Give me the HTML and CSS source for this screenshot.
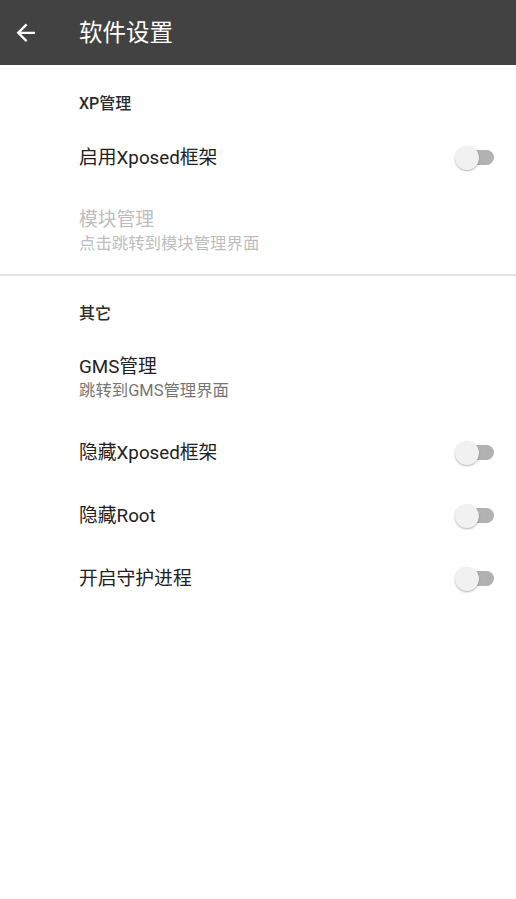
FILE: index.html
```html
<!DOCTYPE html>
<html lang="zh-CN">
<head>
<meta charset="utf-8">
<title>软件设置</title>
<link rel="stylesheet" href="styles.css">
</head>
<body>
<header class="toolbar">
  <span class="back">
    <svg viewBox="0 0 24 24" width="27.6" height="27.6"><path fill="#fff" d="M20 11H7.83l5.59-5.59L12 4l-8 8 8 8 1.41-1.41L7.83 13H20v-2z"/></svg>
  </span>
  <h1 class="title">软件设置</h1>
</header>
<main class="list">
  <div class="category cat-first">XP管理</div>
  <div class="item">
    <div class="text"><div class="label">启用Xposed框架</div></div>
    <span class="switch"><span class="track"></span><span class="thumb"></span></span>
  </div>
  <div class="item two disabled">
    <div class="text"><div class="label">模块管理</div><div class="summary">点击跳转到模块管理界面</div></div>
  </div>
  <div class="divider"></div>
  <div class="category">其它</div>
  <div class="item two">
    <div class="text"><div class="label">GMS管理</div><div class="summary">跳转到GMS管理界面</div></div>
  </div>
  <div class="item">
    <div class="text"><div class="label">隐藏Xposed框架</div></div>
    <span class="switch"><span class="track"></span><span class="thumb"></span></span>
  </div>
  <div class="item">
    <div class="text"><div class="label">隐藏Root</div></div>
    <span class="switch"><span class="track"></span><span class="thumb"></span></span>
  </div>
  <div class="item">
    <div class="text"><div class="label">开启守护进程</div></div>
    <span class="switch"><span class="track"></span><span class="thumb"></span></span>
  </div>
</main>
</body>
</html>
```
FILE: styles.css
```css
* { box-sizing: border-box; }
html, body { margin: 0; padding: 0; background: #fff; }
body {
  font-family: Roboto, "Noto Sans CJK SC", sans-serif;
  color: #212121;
  width: 516px;
}
.toolbar {
  height: 65px;
  background: #424242;
  display: flex;
  align-items: center;
}
.back {
  width: 27.6px;
  height: 27.6px;
  margin-left: 12.4px;
  display: flex;
}
.title {
  margin: 0 0 0 39px;
  font-size: 23.5px;
  font-weight: 400;
  color: #fff;
  line-height: 30px;
}
.list { display: flex; flex-direction: column; }
.category {
  padding: 27px 0 11px 79px;
  font-size: 16px;
  line-height: 22px;
  color: #2b2b2b;
  font-weight: 500;
}
.cat-first { padding-top: 28px; }
.item {
  height: 63px;
  display: flex;
  align-items: center;
  padding: 0 22px 0 79px;
}
.item.two { height: auto; padding-top: 19px; padding-bottom: 18px; }
.text { flex: 1; }
.label { font-size: 18.8px; line-height: 24px; color: #212121; }
.summary { font-size: 16.4px; line-height: 24px; color: #757575; }
.disabled .label, .disabled .summary { color: #bdbdbd; }
.divider { height: 2px; background: #e2e2e2; }
.switch {
  position: relative;
  width: 39px;
  height: 24px;
  display: block;
}
.track {
  position: absolute;
  right: 0;
  top: 4.5px;
  width: 36px;
  height: 15px;
  border-radius: 8px;
  background: #b2b2b2;
}
.thumb {
  position: absolute;
  left: 0;
  top: 0;
  width: 24px;
  height: 24px;
  border-radius: 50%;
  background: #f1f1f1;
  box-shadow: 0 1px 2px rgba(0,0,0,0.3);
}
```
